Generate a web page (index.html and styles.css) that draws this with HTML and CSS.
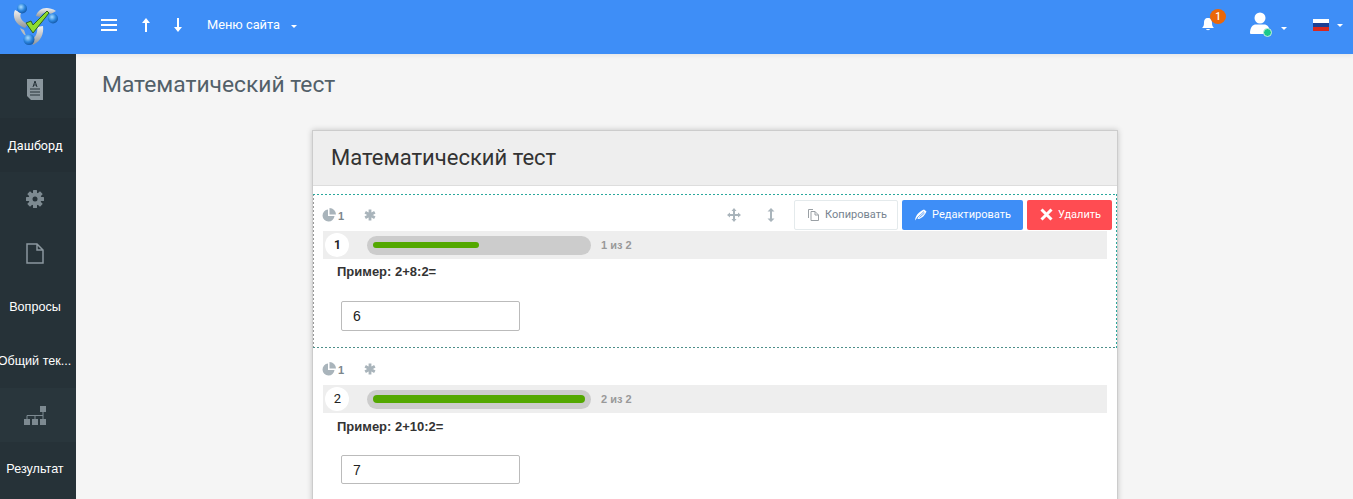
FILE: index.html
```html
<!DOCTYPE html>
<html lang="ru">
<head>
<meta charset="utf-8">
<title>Математический тест</title>
<link rel="stylesheet" href="styles.css">
</head>
<body>
<header class="topbar">
  <div class="logo">
    <svg width="64" height="48" viewBox="0 0 64 48">
      <defs>
        <radialGradient id="sph" cx="40%" cy="35%" r="70%"><stop offset="0" stop-color="#a8dcff"/><stop offset=".55" stop-color="#2b86e0"/><stop offset="1" stop-color="#12539f"/></radialGradient>
        <linearGradient id="swo" x1="0" y1="0" x2="0" y2="1"><stop offset="0" stop-color="#f2f2f2"/><stop offset="1" stop-color="#8f9498"/></linearGradient>
      </defs>
      <path d="M15 10 C12 16 15 25 25 28 L28 24 C22 22 19 17 21 13 Z" fill="url(#swo)"/>
      <path d="M36 16 C38 9 46 5 56 11 L51 14 C46 11 42 13 40 17 Z" fill="url(#swo)"/>
      <path d="M43 26 C44 34 41 41 33 45 L31 40 C36 37 38 32 37 27 Z" fill="url(#swo)"/>
      <path d="M20 28 C22 33 24 35 26 36 L24 30 Z" fill="#b9bdc1"/>
      <circle cx="22" cy="8.500" r="5" fill="url(#sph)"/>
      <circle cx="53" cy="18.500" r="5" fill="url(#sph)"/>
      <circle cx="29" cy="39.500" r="5.500" fill="url(#sph)"/>
      <path d="M26 23 L31 21 L33 25 L47 11 L49 13 L33 33 Z" fill="#8fdc2e" stroke="#2f5f25" stroke-width="1"/>
    </svg>
  </div>
  <nav class="topnav">
    <svg class="ico-menu" width="16" height="12" viewBox="0 0 16 12"><path d="M0 1h16M0 6h16M0 11h16" stroke="#fff" stroke-width="2"/></svg>
    <svg class="ico-arrow" width="8" height="14" viewBox="0 0 8 14"><path d="M4 0 L8 5 H5 V14 H3 V5 H0 Z" fill="#fff"/></svg>
    <svg class="ico-arrow" width="8" height="14" viewBox="0 0 8 14"><path d="M4 14 L8 9 H5 V0 H3 V9 H0 Z" fill="#fff"/></svg>
    <span class="site-menu">Меню сайта</span>
    <span class="caret"></span>
  </nav>
  <div class="topright">
    <div class="bell">
      <svg width="14" height="14" viewBox="0 0 14 14"><path d="M7 1 C10 1 11 3 11 6 C11 9 12 10 13 11 H1 C2 10 3 9 3 6 C3 3 4 1 7 1 Z M5 12 H9 C9 13.500 5 13.500 5 12 Z" fill="#fff"/></svg>
      <span class="badge">1</span>
    </div>
    <div class="user">
      <svg width="20" height="23" viewBox="0 0 20 23"><circle cx="10" cy="6" r="5.500" fill="#fff"/><path d="M0 21 C0 15 3 12.500 6 12.500 H14 C17 12.500 20 15 20 21 Q20 22 19 22 H1 Q0 22 0 21 Z" fill="#fff"/></svg>
      <span class="online"></span>
    </div>
    <span class="caret small"></span>
    <div class="flag"><i class="f-w"></i><i class="f-b"></i><i class="f-r"></i></div>
    <span class="caret small"></span>
  </div>
</header>
<div class="shell">
  <aside class="sidebar">
    <div class="side-item first side-icon">
      <svg width="16" height="22" viewBox="0 0 16 22"><path d="M0 0 H16 V21 H4 L0 17 Z" fill="#8b979e"/><path d="M3 10h10M3 13h10M3 16h10" stroke="#263238" stroke-width="1"/><path d="M6 8 L8 2 L10 8 M7 6h2" stroke="#263238" fill="none"/></svg>
    </div>
    <div class="side-item dark">Дашборд</div>
    <div class="side-item side-icon">
      <svg width="18" height="18" viewBox="0 0 18 18"><g fill="#7d8a91"><circle cx="9" cy="9" r="4.500" fill="none" stroke="#7d8a91" stroke-width="4"/><rect x="7" y="0" width="4" height="18" rx=".5"/><rect x="7" y="0" width="4" height="18" rx=".5" transform="rotate(45 9 9)"/><rect x="7" y="0" width="4" height="18" rx=".5" transform="rotate(90 9 9)"/><rect x="7" y="0" width="4" height="18" rx=".5" transform="rotate(135 9 9)"/></g><circle cx="9" cy="9" r="2.500" fill="#263238"/></svg>
    </div>
    <div class="side-item side-icon">
      <svg width="18" height="21" viewBox="0 0 18 21"><path d="M1 1 H11 L17 7 V20 H1 Z M11 1 V7 H17" fill="none" stroke="#8b979e" stroke-width="1.500"/></svg>
    </div>
    <div class="side-item">Вопросы</div>
    <div class="side-item clip">Общий тек...</div>
    <div class="side-item side-icon lighter">
      <svg width="22" height="19" viewBox="0 0 22 19"><path fill="#7d8a91" d="M16 0h6v6h-6zM0 13h6v6H0zM8 13h6v6H8zM16 13h6v6h-6z"/><path d="M3 13V9.500h16M11 13V9.500M19 13V6" fill="none" stroke="#7d8a91"/></svg>
    </div>
    <div class="side-item">Результат</div>
  </aside>
  <main class="content">
    <h1 class="page-title">Математический тест</h1>
    <section class="card">
      <h2 class="card-title">Математический тест</h2>
      <div class="question active">
        <div class="q-tools">
          <div class="q-meta">
            <svg class="pie" width="14" height="14" viewBox="0 0 14 14"><path d="M6 1.500 A6 6 0 1 0 12.500 8 H6 Z" fill="#a9b4bb"/><path d="M7.500 0 A6.500 6.500 0 0 1 14 6.500 H7.500 Z" fill="#a9b4bb"/></svg>
            <b class="pts">1</b>
            <svg class="star" width="12" height="12" viewBox="0 0 12 12"><path d="M6 .5v11M1.200 3.200l9.600 5.600M10.800 3.200l-9.600 5.600" stroke="#a9b4bb" stroke-width="2.800"/></svg>
          </div>
          <div class="q-actions">
            <svg class="tool" width="14" height="14" viewBox="0 0 14 14"><path d="M7 0 L9.500 3 H8 V6 H11 V4.500 L14 7 L11 9.500 V8 H8 V11 H9.500 L7 14 L4.500 11 H6 V8 H3 V9.500 L0 7 L3 4.500 V6 H6 V3 H4.500 Z" fill="#a9b4bb"/></svg>
            <svg class="tool tool-v" width="8" height="14" viewBox="0 0 8 14"><path d="M4 0 L7.500 3.500 H5 V10.500 H7.500 L4 14 L.5 10.500 H3 V3.500 H.5 Z" fill="#a9b4bb"/></svg>
            <button class="btn btn-light"><svg width="11" height="12" viewBox="0 0 11 12"><path d="M.5 9 V.5 H5 M3 2.500 H7 L10.500 6 V11.500 H3 Z M7 2.500 V6 H10.500" fill="none" stroke="#9aa0a5"/></svg>Копировать</button>
            <button class="btn btn-blue"><svg width="13" height="12" viewBox="0 0 13 12"><path d="M1 11.500 C1.500 7 4 3 10 .5 L12.500 2.500 C11 6 8 9.500 4.500 10 L3 9 Z" fill="#fff"/><path d="M3 9 L10 2.500 M5.500 8.500 L10.500 4" stroke="#3e8ef7" stroke-width=".8"/></svg>Редактировать</button>
            <button class="btn btn-red"><svg width="13" height="13" viewBox="0 0 13 13"><path d="M1.500 1.500 L11.500 11.500 M11.500 1.500 L1.500 11.500" stroke="#fff" stroke-width="3"/></svg>Удалить</button>
          </div>
        </div>
        <div class="progress-row">
          <span class="num">1</span>
          <div class="track"><div class="fill half"></div></div>
          <span class="of">1 из 2</span>
        </div>
        <p class="q-text">Пример: 2+8:2=</p>
        <input class="answer" type="text" value="6">
      </div>
      <div class="question second">
        <div class="q-tools">
          <div class="q-meta">
            <svg class="pie" width="14" height="14" viewBox="0 0 14 14"><path d="M6 1.500 A6 6 0 1 0 12.500 8 H6 Z" fill="#a9b4bb"/><path d="M7.500 0 A6.500 6.500 0 0 1 14 6.500 H7.500 Z" fill="#a9b4bb"/></svg>
            <b class="pts">1</b>
            <svg class="star" width="12" height="12" viewBox="0 0 12 12"><path d="M6 .5v11M1.200 3.200l9.600 5.600M10.800 3.200l-9.600 5.600" stroke="#a9b4bb" stroke-width="2.800"/></svg>
          </div>
        </div>
        <div class="progress-row">
          <span class="num">2</span>
          <div class="track"><div class="fill"></div></div>
          <span class="of">2 из 2</span>
        </div>
        <p class="q-text">Пример: 2+10:2=</p>
        <input class="answer" type="text" value="7">
      </div>
    </section>
  </main>
</div>
</body>
</html>
```
FILE: styles.css
```css
* { box-sizing: border-box; }
html, body { margin: 0; height: 499px; overflow: hidden; }
body { background: #f5f5f5; font-family: "Liberation Sans", Arial, sans-serif; color: #333; }

.topbar { height: 54px; background: #3e8ef7; display: flex; align-items: center; color: #fff; position: relative; box-shadow: 0 2px 4px rgba(0,0,0,.06); }
.logo { width: 76px; height: 54px; flex: none; }
.logo svg { display: block; }
.topnav { display: flex; align-items: center; padding-left: 25px; margin-top: -4px; }
.ico-arrow { margin-left: 25px; }
.ico-arrow + .ico-arrow { margin-left: 24px; }
.site-menu { font: 12.800px Roboto, sans-serif; margin-left: 25px; margin-bottom: 2px; }
.caret { width: 0; height: 0; border: 3.500px solid transparent; border-top-color: #fff; border-bottom: 0; margin-left: 11px; margin-top: 2px; }
.topright { margin-left: auto; display: flex; align-items: center; position: relative; margin-top: -4px; }
.bell { position: relative; width: 14px; height: 14px; margin-right: 35px; margin-top: -3px; display: flex; }
.badge { position: absolute; left: 9px; top: -8px; width: 16px; height: 15px; border-radius: 50%; background: #eb6709; color: #fff; font: 500 10px/15px Roboto, sans-serif; text-align: center; }
.user { position: relative; width: 20px; height: 23px; margin-top: -4px; }
.user svg { display: block; }
.online { position: absolute; right: -2px; bottom: -2px; width: 9px; height: 9px; border-radius: 50%; background: #1cc88a; border: 1px solid #c9f2dd; }
.caret.small { border-width: 3px; border-bottom: 0; margin-left: 11px; margin-top: 6px; }
.flag { width: 16px; height: 13px; margin-left: 26px; display: flex; flex-direction: column; }
.flag + .caret.small { margin-left: 8px; margin-right: 10px; margin-top: 0; }
.flag i { flex: 1; display: block; }
.f-w { background: #fff; }
.f-b { background: #1c3f94; }
.f-r { background: #d9281e; }

.shell { display: flex; }
.sidebar { width: 76px; height: 445px; background: #263238; flex: none; overflow: hidden; color: #fff; font-size: 12.600px; }
.side-item { height: 54px; display: flex; align-items: center; justify-content: center; white-space: nowrap; padding-right: 6px; }
.side-item.first { height: 64px; padding-top: 8px; }
.side-item.dark { background: #242f35; font-family: Roboto, sans-serif; }
.side-item.lighter { background: #29363c; }
.clip { overflow: hidden; padding-right: 7px; }

.content { flex: 1; min-width: 0; }
.page-title { margin: 0; padding: 17px 0 0 26px; font: 400 22.800px/28px Roboto, sans-serif; color: #526069; height: 76px; }
.card { width: 806px; margin-left: 236px; background: #fff; border: 1px solid #ccc; box-shadow: 0 0 6px rgba(0,0,0,.2); height: 420px; }
.card-title { margin: 0; height: 55px; padding: 0 18px; font: 400 22px/53px Roboto, sans-serif; color: #333; background: #eee; border-bottom: 1px solid #ddd; }
.question { padding: 0 10px; }
.question.active { margin: 8px 0 1px; height: 154px; padding: 5px 10px 0; background:
  linear-gradient(90deg, #2aa89c 50%, transparent 50%) left top / 4px 1px repeat-x,
  linear-gradient(90deg, #4d8f8a 50%, transparent 50%) left bottom / 4px 1px repeat-x,
  linear-gradient(#999 50%, transparent 50%) left top / 1px 4px repeat-y,
  linear-gradient(#2aa89c 50%, transparent 50%) right top / 1px 4px repeat-y; }
.q-tools { display: flex; align-items: center; justify-content: space-between; height: 31px; }
.q-meta { display: flex; align-items: center; margin-left: -1px; }
.pts { font-size: 11px; color: #7b868c; margin-left: 2px; margin-top: 2px; }
.star { margin-left: 20px; }
.q-actions { display: flex; align-items: center; margin-right: -5px; }
.tool-v { margin-left: 26px; margin-right: 19px; }
.btn { height: 30px; border-radius: 2px; border: 1px solid transparent; font: 11px Roboto, sans-serif; color: #fff; display: flex; align-items: center; gap: 6px; margin-left: 4px; padding: 0; justify-content: center; }
.btn-light { width: 104px; background: #fff; border-color: #e4eaec; color: #76838f; padding-left: 3px; }
.btn-blue { width: 121px; background: #3e8ef7; gap: 5px; }
.btn-red { width: 85px; background: #ff4c52; gap: 5px; padding-left: 2px; }
.tool-v + .btn { margin-left: 0; }
.progress-row { display: flex; align-items: center; height: 28px; background: #eee; margin-top: 1px; }
.num { width: 24px; height: 24px; border-radius: 50%; background: #fff; margin-left: 2px; text-align: center; font: 700 12px/24px Roboto, sans-serif; color: #222; padding-left: 1px; }
.second .num { font: 400 13px/24px Roboto, sans-serif; }
.track { width: 224px; height: 19px; margin-left: 18px; background: #ccc; border-radius: 10px; padding: 6px; }
.fill { height: 6px; background: #53a800; border-radius: 3px; }
.fill.half { width: 106px; }
.of { font-size: 11px; font-weight: 700; color: #999; margin-left: 10px; }
.q-text { margin: 0; padding: 6px 0 0 14px; font-size: 13px; font-weight: 700; color: #333; line-height: 14px; height: 42px; }
.answer { display: block; width: 179px; height: 30px; margin-left: 18px; border: 1px solid #bbb; border-radius: 2px; font: 14px "Liberation Sans", Arial, sans-serif; padding: 0 11px; color: #222; outline: 0; background: #fff; }
.question.second { padding: 5px 10px 0; }
.question.second .q-tools { height: 30px; }
.question.second .q-text { padding-top: 7px; }
.question.second .answer { height: 29px; }
.question.second .track { padding: 5px 6px; }
.question.second .fill { height: 8px; border-radius: 4px; }
```
